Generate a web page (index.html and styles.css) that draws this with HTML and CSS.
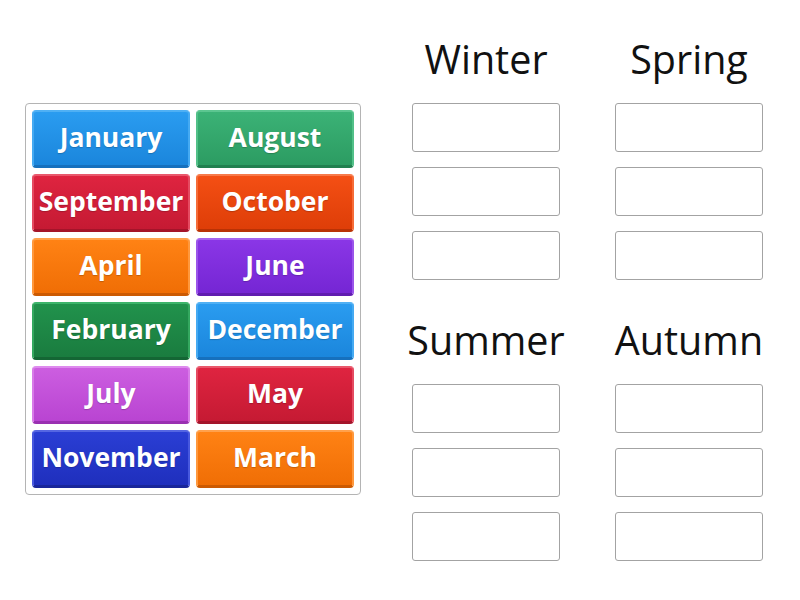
FILE: index.html
```html
<!DOCTYPE html>
<html>
<head>
<meta charset="utf-8">
<link rel="stylesheet" href="styles.css">
</head>
<body>
<main class="page">
  <div class="bank">
    <div class="tile blue">January</div>
    <div class="tile green">August</div>
    <div class="tile red">September</div>
    <div class="tile vermilion">October</div>
    <div class="tile orange">April</div>
    <div class="tile purple">June</div>
    <div class="tile darkgreen">February</div>
    <div class="tile blue">December</div>
    <div class="tile orchid">July</div>
    <div class="tile red">May</div>
    <div class="tile navy">November</div>
    <div class="tile orange">March</div>
  </div>
  <div class="groups">
    <section class="group">
      <h2 class="title">Winter</h2>
      <div class="slots"><div class="slot"></div><div class="slot"></div><div class="slot"></div></div>
    </section>
    <section class="group">
      <h2 class="title">Spring</h2>
      <div class="slots"><div class="slot"></div><div class="slot"></div><div class="slot"></div></div>
    </section>
    <section class="group">
      <h2 class="title">Summer</h2>
      <div class="slots"><div class="slot"></div><div class="slot"></div><div class="slot"></div></div>
    </section>
    <section class="group">
      <h2 class="title">Autumn</h2>
      <div class="slots"><div class="slot"></div><div class="slot"></div><div class="slot"></div></div>
    </section>
  </div>
</main>
</body>
</html>
```
FILE: styles.css
```css
html, body {
  margin: 0;
  padding: 0;
  background: #ffffff;
  font-family: "Open Sans", "Liberation Sans", sans-serif;
}

.page {
  display: flex;
  align-items: flex-start;
  padding-left: 25px;
  width: 800px;
  height: 600px;
  box-sizing: border-box;
}

.bank {
  margin-top: 103px;
  width: 336px;
  box-sizing: border-box;
  border: 1px solid #b4b4b4;
  border-radius: 4px;
  padding: 6px;
  display: grid;
  grid-template-columns: 158px 158px;
  grid-auto-rows: 58px;
  column-gap: 6px;
  row-gap: 6px;
}

.tile {
  box-sizing: border-box;
  border-radius: 4px;
  border: 2px solid transparent;
  border-bottom-width: 3px;
  display: flex;
  align-items: center;
  justify-content: center;
  color: #ffffff;
  font-weight: 700;
  font-size: 26.5px;
  letter-spacing: 0;
  white-space: nowrap;
  text-shadow: 0 1px 1px rgba(0, 0, 0, 0.2);
  padding-bottom: 4px;
}

.blue {
  background: linear-gradient(#2a9cf0, #1b86dc);
  border-color: #4fb0f4 #45aaf2 #1670bd #45aaf2;
}
.green {
  background: linear-gradient(#3bb276, #2c9c62);
  border-color: #5cc690 #52c088 #21804f #52c088;
}
.red {
  background: linear-gradient(#df2440, #c51a33);
  border-color: #e9586c #e54b61 #a4142a #e54b61;
}
.vermilion {
  background: linear-gradient(#f44f14, #de3e08);
  border-color: #f77a4a #f66c38 #b93205 #f66c38;
}
.orange {
  background: linear-gradient(#ff8214, #f06e05);
  border-color: #ffa14c #ff983c #cc5a02 #ff983c;
}
.purple {
  background: linear-gradient(#8a36e6, #7526d4);
  border-color: #a563ee #9b55ea #601cb0 #9b55ea;
}
.darkgreen {
  background: linear-gradient(#21924c, #1a7c3f);
  border-color: #3cb46a #34a85f #146634 #34a85f;
}
.orchid {
  background: linear-gradient(#cc5ee0, #b944d2);
  border-color: #de8aee #d87be8 #9a30b2 #d87be8;
}
.navy {
  background: linear-gradient(#2a3ed4, #1f2fbd);
  border-color: #5566e2 #4758de #19269a #4758de;
}

.groups {
  margin-left: 51px;
  padding-top: 34px;
  display: grid;
  grid-template-columns: 148px 148px;
  column-gap: 55px;
  row-gap: 35px;
}

.title {
  margin: 0 -30px 19px;
  font-weight: 400;
  font-size: 39.5px;
  line-height: 50px;
  text-align: center;
  color: #111111;
}

.slots {
  display: flex;
  flex-direction: column;
  gap: 15px;
}

.slot {
  height: 49px;
  box-sizing: border-box;
  border: 1px solid #a3a3a3;
  border-radius: 3px;
  background: #ffffff;
}
```
